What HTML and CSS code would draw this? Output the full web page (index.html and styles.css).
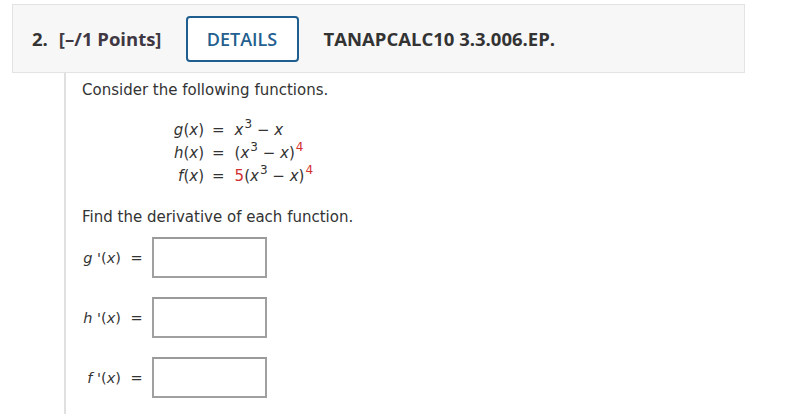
FILE: index.html
```html
<!DOCTYPE html>
<html>
<head>
<link rel="stylesheet" href="styles.css">
</head>
<body>

<div class="question-header">
  <span class="q-number">2.</span>
  <span class="q-points">[&ndash;/1 Points]</span>
  <button class="details-btn">DETAILS</button>
  <span class="q-code">TANAPCALC10 3.3.006.EP.</span>
</div>

<div class="question-body">
  <p class="q-text">Consider the following functions.</p>

  <div class="func-list">
    <span class="func-name"><i>g</i>(<i>x</i>)</span>
    <span class="eq">=</span>
    <span class="func-rhs"><i>x</i><sup>3</sup> &minus; <i>x</i></span>

    <span class="func-name"><i>h</i>(<i>x</i>)</span>
    <span class="eq">=</span>
    <span class="func-rhs">(<i>x</i><sup>3</sup> &minus; <i>x</i>)<sup class="red">4</sup></span>

    <span class="func-name"><i>f</i>(<i>x</i>)</span>
    <span class="eq">=</span>
    <span class="func-rhs"><span class="red">5</span>(<i>x</i><sup>3</sup> &minus; <i>x</i>)<sup class="red">4</sup></span>
  </div>

  <p class="q-text">Find the derivative of each function.</p>

  <div class="answer-list">
    <span class="ans-label"><i>g</i> '(<i>x</i>)</span>
    <span class="eq">=</span>
    <input class="ans-box" type="text">

    <span class="ans-label"><i>h</i> '(<i>x</i>)</span>
    <span class="eq">=</span>
    <input class="ans-box" type="text">

    <span class="ans-label"><i>f</i> '(<i>x</i>)</span>
    <span class="eq">=</span>
    <input class="ans-box" type="text">
  </div>
</div>

</body>
</html>
```

FILE: styles.css
```css
body {
  margin: 0;
  background-color: #fff;
  font-family: "DejaVu Sans", Verdana, sans-serif;
  color: #333;
}

.question-header {
  display: flex;
  align-items: center;
  width: 731px;
  height: 67px;
  margin: 4px 0 0 12px;
  padding: 0;
  background-color: #f7f7f7;
  border: 1px solid #e3e3e3;
  font-family: "Open Sans", sans-serif;
  font-weight: bold;
  font-size: 18.5px;
  color: #333;
}

.q-number {
  margin-left: 19px;
}

.q-points {
  margin-left: 11px;
  color: #3f3843;
}

.details-btn {
  margin-left: 24px;
  width: 113px;
  height: 46px;
  background-color: #fff;
  border: 2px solid #1f5f8f;
  border-radius: 4px;
  font-family: "Open Sans", sans-serif;
  font-weight: 600;
  font-size: 18px;
  color: #245f8f;
  padding: 0;
}

.q-code {
  margin-left: 25px;
}

.question-body {
  margin-left: 64px;
  border-left: 2px solid #e0e0e0;
  padding: 7px 0 20px 16px;
  font-size: 15px;
}

.q-text {
  margin: 0;
  line-height: 20px;
}

.func-list {
  display: grid;
  grid-template-columns: 32px auto 1fr;
  column-gap: 8px;
  row-gap: 2px;
  margin: 20px 0 20px 90px;
  line-height: 21px;
  font-size: 15px;
}

.func-rhs {
  padding-left: 2px;
}

.func-name,
.ans-label {
  text-align: right;
}

.eq {
  text-align: center;
}

sup {
  font-size: 12px;
  line-height: 0;
  vertical-align: 7px;
  margin-left: 1px;
}

.red {
  color: #d32f2f;
}

.answer-list {
  display: grid;
  grid-template-columns: 39px 19px 115px;
  column-gap: 6px;
  row-gap: 19px;
  align-items: center;
  margin-top: 10px;
  font-size: 14.5px;
}

.ans-box {
  box-sizing: border-box;
  width: 115px;
  height: 41px;
  margin: 0;
  border: 2px solid #a0a0a0;
  border-top-color: #9a9a9a;
  background-color: #fff;
}
```
